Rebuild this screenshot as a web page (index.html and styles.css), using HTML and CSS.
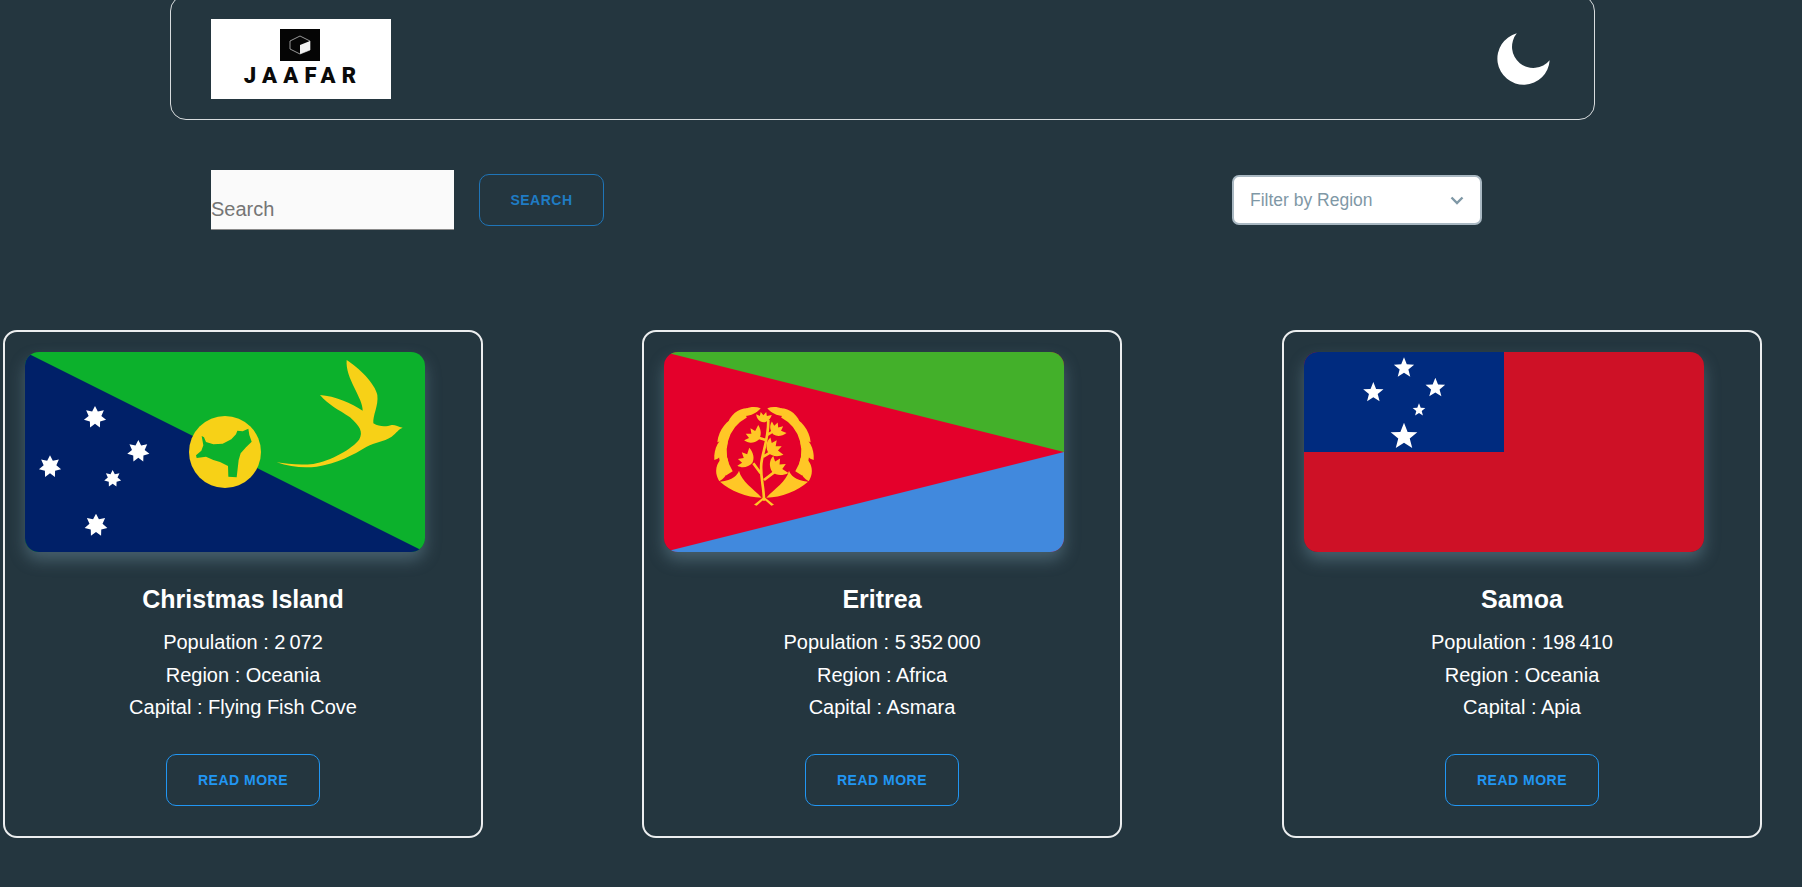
FILE: index.html
```html
<!DOCTYPE html>
<html>
<head>
    <title>Countries</title>
    <link rel="stylesheet" href="styles.css">
</head>
<body>
    <svg class="defs" width="0" height="0">
        <defs>
            <polygon id="star5" points="0,-1 .26,-.34 .951,-.309 .41,.135 .588,.809 0,.44 -.588,.809 -.41,.135 -.951,-.309 -.26,-.34"/>
            <polygon id="star7" points="0,-1 .25,-.52 .782,-.623 .56,-.128 .975,.223 .45,.359 .434,.901 0,.575 -.434,.901 -.45,.359 -.975,.223 -.56,-.128 -.782,-.623 -.25,-.52"/>
            <path id="sprig" d="M0 20 C-16 18 -30 8 -32 -10 L-17 -4 L-15 -20 L-3 -8 L7 -22 L11 -6 L30 -12 C26 6 14 18 0 20 Z"/>
        </defs>
    </svg>

    <header class="header">
        <div class="logo">
            <svg class="logo-mark" viewBox="0 0 40 32">
                <rect width="40" height="32" fill="#050505"/>
                <path d="M20 7 L30 12 V21 L20 25 L10 20 V12 Z" fill="none" stroke="#bdbdbd" stroke-width="0.8"/>
                <path d="M20 16 L30 12 V21 L20 25 Z" fill="#f2f2f2"/>
            </svg>
            <span class="logo-text">JAAFAR</span>
        </div>
        <svg class="moon" viewBox="885 95 170 170">
            <path d="M950 102 A78 78 0 1 0 1048 182 A63 63 0 0 1 950 102 Z" fill="#fff"/>
        </svg>
    </header>

    <div class="toolbar">
        <input class="search-input" type="text" placeholder="Search">
        <button class="btn search-btn">SEARCH</button>
        <div class="region-select">
            <span>Filter by Region</span>
            <svg viewBox="0 0 14 9" width="14" height="9">
                <path d="M1.5 1.5 L7 7 L12.5 1.5" fill="none" stroke="#7f98a6" stroke-width="2.4"/>
            </svg>
        </div>
    </div>

    <main class="cards">
        <article class="card">
            <svg class="flag" viewBox="75 96 1200 600">
                <rect x="75" y="96" width="1200" height="600" fill="#0cb12c"/>
                <polygon points="75,96 1275,696 75,696" fill="#002068"/>
                <circle cx="675" cy="396" r="108" fill="#f7d117"/>
                <path d="M605 348 L612 352 L618 366 L640 373 L668 371 L694 358 L708 343 L712 332 L728 334 L745 326 L748 345 L755 365 L738 382 L722 400 L716 420 L710 472 L685 470 L684 438 L660 426 L640 420 L618 410 L590 414 L588 406 L604 392 L610 376 Z" fill="#0cb12c"/>
                <path d="M1040 120 C1075 142 1125 190 1132 225 C1136 258 1118 285 1120 310 C1140 322 1160 320 1175 315 C1185 314 1195 320 1208 323 C1195 328 1190 338 1175 350 C1150 366 1125 366 1100 380 C1060 405 1010 430 950 440 C915 444 870 442 830 427 C860 432 900 436 940 432 C990 425 1060 385 1078 358 C1090 335 1080 320 1050 292 C1015 268 985 255 960 225 C1005 228 1055 250 1088 272 C1090 235 1035 175 1040 120 Z" fill="#f7d117"/>
                <use href="#star7" transform="translate(285 292) scale(34)" fill="#fff"/>
                <use href="#star7" transform="translate(415 394) scale(34)" fill="#fff"/>
                <use href="#star7" transform="translate(150 440) scale(34)" fill="#fff"/>
                <use href="#star7" transform="translate(338 476) scale(26)" fill="#fff"/>
                <use href="#star7" transform="translate(288 616) scale(35)" fill="#fff"/>
            </svg>
            <h2 class="card-title">Christmas Island</h2>
            <p class="card-line">Population : 2&#8239;072</p>
            <p class="card-line">Region : Oceania</p>
            <p class="card-line">Capital : Flying Fish Cove</p>
            <button class="btn read-btn">READ MORE</button>
        </article>

        <article class="card">
            <svg class="flag" viewBox="72 36 1200 600">
                <rect x="72" y="36" width="1200" height="600" fill="#e4002b"/>
                <polygon points="72,36 1272,36 1272,336" fill="#43b02a"/>
                <polygon points="72,636 1272,336 1272,636" fill="#4189dd"/>
                <g fill="#ffc726">
                    <g id="wreath-half">
                        <path d="M315 222 A125 125 0 0 0 268 400" fill="none" stroke="#ffc726" stroke-width="24"/>
                        <path d="M362 205 C340 196 310 203 298 224 C320 234 345 224 362 205 Z"/>
                        <path d="M322 205 C295 205 268 225 260 260 C290 260 315 237 322 205 Z"/>
                        <path d="M290 232 C262 238 236 268 232 307 C262 300 285 268 290 232 Z"/>
                        <path d="M262 285 C238 295 220 325 223 360 C250 352 268 320 262 285 Z"/>
                        <path d="M258 345 C232 360 218 392 238 424 C264 410 274 377 258 345 Z"/>
                        <path d="M240 425 C270 452 320 472 365 473 C340 445 305 425 297 392 C292 405 280 420 240 425 Z"/>
                        <path d="M372 470 L342 494 L350 497 L372 478 Z"/>
                    </g>
                    <use href="#wreath-half" transform="translate(744 0) scale(-1 1)"/>
                    <use href="#sprig" transform="translate(372 232) rotate(5) scale(.75)"/>
                    <use href="#sprig" transform="translate(342 285) rotate(-45) scale(1)"/>
                    <use href="#sprig" transform="translate(412 270) rotate(40) scale(.9)"/>
                    <use href="#sprig" transform="translate(402 326) rotate(55) scale(1.05)"/>
                    <use href="#sprig" transform="translate(320 356) rotate(-55) scale(1.05)"/>
                    <use href="#sprig" transform="translate(414 382) rotate(50) scale(1.1)"/>
                </g>
                <path d="M372 482 C372 440 360 410 364 370 C368 335 385 300 385 240 M362 400 L340 370 M370 350 L395 335 M372 420 L405 395 M378 300 L345 290 M382 285 L405 270" fill="none" stroke="#ffc726" stroke-width="8"/>
            </svg>
            <h2 class="card-title">Eritrea</h2>
            <p class="card-line">Population : 5&#8239;352&#8239;000</p>
            <p class="card-line">Region : Africa</p>
            <p class="card-line">Capital : Asmara</p>
            <button class="btn read-btn">READ MORE</button>
        </article>

        <article class="card">
            <svg class="flag" viewBox="42 36 1200 600">
                <rect x="42" y="36" width="1200" height="600" fill="#ce1126"/>
                <rect x="42" y="36" width="600" height="300" fill="#002b7f"/>
                <use href="#star5" transform="translate(342 84) scale(32)" fill="#fff"/>
                <use href="#star5" transform="translate(250 158) scale(32)" fill="#fff"/>
                <use href="#star5" transform="translate(436 144) scale(31)" fill="#fff"/>
                <use href="#star5" transform="translate(387 210) scale(20)" fill="#fff"/>
                <use href="#star5" transform="translate(342 290) scale(42)" fill="#fff"/>
            </svg>
            <h2 class="card-title">Samoa</h2>
            <p class="card-line">Population : 198&#8239;410</p>
            <p class="card-line">Region : Oceania</p>
            <p class="card-line">Capital : Apia</p>
            <button class="btn read-btn">READ MORE</button>
        </article>
    </main>
</body>
</html>
```

FILE: styles.css
```css
body {
    margin: 0;
    height: 887px;
    overflow: hidden;
    font-family: "Liberation Sans", Arial, sans-serif;
    background-color: #24363f;
}
.defs {
    position: absolute;
}
.header {
    display: flex;
    justify-content: space-between;
    align-items: center;
    width: 1425px;
    box-sizing: border-box;
    margin: -5px 0 0 170px;
    padding: 23px 40px 20px;
    border: 1px solid #d8dcde;
    border-radius: 16px;
}
.logo {
    display: flex;
    flex-direction: column;
    align-items: center;
    justify-content: flex-start;
    width: 180px;
    height: 80px;
    box-sizing: border-box;
    padding-top: 10px;
    background-color: #fff;
}
.logo-mark {
    width: 40px;
    height: 32px;
    margin-right: 3px;
}
.logo-text {
    margin-top: 4px;
    padding-left: 4px;
    font-family: Roboto, "Liberation Sans", sans-serif;
    font-size: 22px;
    line-height: 22px;
    font-weight: 900;
    letter-spacing: 6.2px;
    color: #0a0a0a;
}
.moon {
    width: 57px;
    height: 57px;
    margin-right: 2px;
}
.toolbar {
    display: flex;
    align-items: center;
    justify-content: flex-start;
    width: 1425px;
    box-sizing: border-box;
    margin: 50px 0 0 170px;
    padding-left: 41px;
}
.search-input {
    width: 243px;
    height: 60px;
    box-sizing: border-box;
    padding: 20px 0 0;
    border: none;
    border-bottom: 1px solid #8a8a8a;
    border-radius: 0;
    outline: none;
    background-color: #fafafa;
    font-family: "Liberation Sans", Arial, sans-serif;
    font-size: 20px;
}
.search-input::placeholder {
    color: #757575;
    opacity: 1;
}
.btn {
    box-sizing: border-box;
    height: 52px;
    padding: 0;
    background: none;
    border: 1px solid;
    border-radius: 10px;
    font-family: "Liberation Sans", Arial, sans-serif;
    font-size: 14px;
    font-weight: 700;
    letter-spacing: 0.5px;
    cursor: pointer;
}
.search-btn {
    width: 125px;
    margin-left: 25px;
    border-color: #1f75b8;
    color: #1f7cc4;
}
.region-select {
    display: flex;
    justify-content: space-between;
    align-items: center;
    width: 250px;
    height: 50px;
    box-sizing: border-box;
    margin-left: 628px;
    padding: 0 16px;
    background-color: #fff;
    border: 2px solid #a9b8c2;
    border-radius: 7px;
    font-size: 17.5px;
    color: #7f98a6;
}
.cards {
    display: grid;
    grid-template-columns: 639px 640px 480px;
    margin-top: 100px;
    padding-left: 3px;
}
.card {
    display: flex;
    flex-direction: column;
    align-items: center;
    width: 480px;
    height: 508px;
    box-sizing: border-box;
    padding: 20px;
    border: 2px solid #eceeef;
    border-radius: 14px;
    color: #fff;
}
.flag {
    display: block;
    align-self: flex-start;
    width: 400px;
    height: 200px;
    border-radius: 14px;
    box-shadow: 0 8px 16px rgba(130, 165, 185, 0.38);
}
.card-title {
    margin: 33px 0 13px;
    font-size: 25px;
    line-height: 28px;
    font-weight: 700;
}
.card-line {
    margin: 0;
    font-size: 20px;
    line-height: 32.5px;
}
.read-btn {
    width: 154px;
    margin-top: 30px;
    border-color: #2196f3;
    color: #2196f3;
}
```
